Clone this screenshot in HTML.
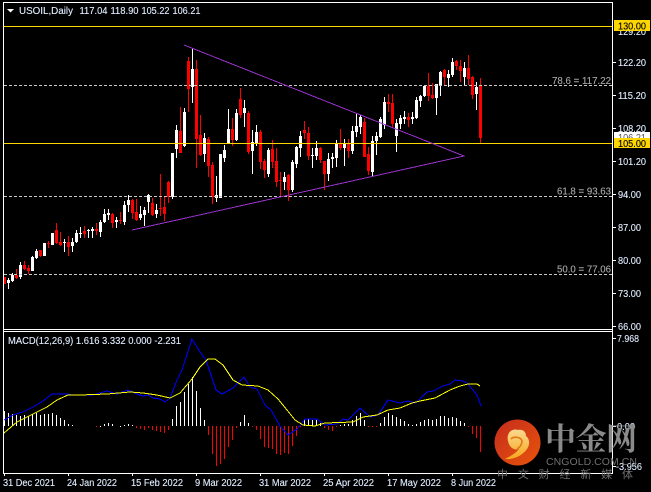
<!DOCTYPE html>
<html><head><meta charset="utf-8"><style>
html,body{margin:0;padding:0;background:#000;width:651px;height:492px;overflow:hidden}
svg{display:block}
text{font-family:"Liberation Sans",sans-serif;font-size:10px;fill:#e6f0ff;stroke:#cfe2ff;stroke-width:.12}
.g{fill:#a8a8a8;stroke:#a8a8a8}
.k{fill:#000;stroke:#000}
</style></head><body>
<svg width="651" height="492" viewBox="0 0 651 492" xmlns="http://www.w3.org/2000/svg">
<rect width="651" height="492" fill="#000"/>
<g transform="translate(.5 0)" fill="none" shape-rendering="crispEdges">
<path stroke="#fff" d="M8 278V289M12 273V282M20 262V279M32 256V271M36 249V259M44 243V256M52 233V245M64 239V252M72 238V252M76 230V243M80 227V238M88 229V238M92 227V238M100 220V237M104 209V223M108 209V220M116 217V228M124 201V225M128 195V212M140 206V220M144 207V226M148 194V213M156 204V218M172 153V199M176 125V158M184 108V147M192 48V103M204 133V162M216 176V202M220 154V198M224 145V162M228 109V143M236 109V141M244 100V127M252 130V174M256 125V146M268 148V177M284 172V190M292 160V192M296 146V168M300 131V157M312 148V168M316 141V160M328 153V181M332 153V168M336 140V167M344 139V166M352 126V154M356 113V137M360 115V134M372 136V176M376 132V155M380 117V138M384 97V129M396 119V152M400 115V129M404 111V124M412 112V124M416 97V119M420 95V107M424 85V97M436 84V115M440 71V96M448 70V87M452 58V77M464 62V86M476 82V110"/>
<path stroke="#fff" stroke-width="3" d="M8 280V283M12 275V281M20 265V277M32 257V271M36 251V258M44 243V256M52 233V245M64 242V243M72 242V246M76 233V242M80 233V234M88 230V231M92 229V231M100 222V232M104 214V222M108 213V215M116 220V222M124 205V222M128 200V205M140 214V218M144 210V215M148 195V202M156 210V214M172 153V197M176 130V149M184 112V146M192 69V87M204 138V154M216 195V198M220 154V198M224 150V158M228 129V143M236 113V140M244 108V113M252 142V151M256 132V144M268 150V174M284 177V182M292 162V190M296 147V164M300 136V148M312 155V156M316 148V156M328 159V174M332 157V159M336 144V158M344 143V148M352 131V151M356 126V132M360 117V127M372 141V172M376 136V141M380 119V137M384 102V125M396 123V136M400 118V124M404 117V119M412 117V119M416 100V118M420 96V101M424 86V96M436 84V98M440 72V85M448 74V78M452 62V75M464 68V77M476 87V94"/>
<path stroke="#f00" d="M4 277V284M16 269V279M24 261V270M28 265V274M40 250V257M48 241V248M56 223V244M60 232V246M68 236V256M84 226V238M96 223V235M112 213V228M120 212V224M132 199V219M136 199V221M152 198V216M160 174V216M164 196V221M168 181V203M180 107V153M188 57V112M196 60V168M200 115V156M208 137V177M212 162V204M232 118V146M240 88V118M248 111V154M260 130V169M264 159V178M272 140V168M276 148V187M280 172V197M288 174V201M304 121V139M308 127V160M320 147V163M324 161V190M340 129V150M348 139V158M364 118V157M368 147V175M388 94V112M392 94V128M408 113V127M428 73V101M432 83V99M444 69V86M456 60V70M460 60V82M468 55V85M472 76V99M480 78V143"/>
<path stroke="#f00" stroke-width="3" d="M4 277V284M16 275V278M24 265V269M28 268V271M40 250V256M48 243V244M56 230V243M60 242V245M68 242V247M84 231V234M96 229V231M112 214V223M120 220V221M132 200V213M136 212V220M152 203V215M160 208V209M164 207V214M168 182V197M180 131V153M188 61V89M196 69V139M200 135V155M208 139V166M212 165V197M232 129V140M240 99V115M248 113V152M260 132V162M264 161V170M272 149V162M276 161V182M280 180V181M288 175V190M304 130V133M308 133V156M320 148V160M324 161V174M340 144V148M348 144V151M364 122V157M368 154V171M388 102V104M392 103V124M408 117V120M428 86V96M432 95V98M444 70V77M456 61V66M460 66V71M468 68V79M472 77V95M480 86V138"/>
</g>
<g shape-rendering="crispEdges">
<path d="M4 85.5H612M4 196.5H612M4 274.5H612" stroke="#c8c8c8" stroke-dasharray="3 2" fill="none"/>
<path d="M4 26.5H612M4 143.5H612" stroke="#ffd700" fill="none"/>
<path d="M184 45L464 156L132 230" stroke="#9932cc" fill="none"/>
<path d="M3.5 2V474M3 2.5H613M612.5 2V474M3 329.5H613M3 331.5H613M3 473.5H613" stroke="#fff" fill="none"/>
<path d="M613 62.5h3M613 95.5h3M613 128.5h3M613 161.5h3M613 194.5h3M613 227.5h3M613 260.5h3M613 293.5h3M613 326.5h3M613 338.5h3M613 426.5h3M613 466.5h3M4.5 473v3M68.5 473v3M132.5 473v3M196.5 473v3M260.5 473v3M324.5 473v3M388.5 473v3M452.5 473v3" stroke="#fff" fill="none"/>
</g>
<g transform="translate(.5 0)" fill="none" shape-rendering="crispEdges">
<path stroke="#fff" d="M4 411V426M8 413V426M12 414V426M16 415V426M20 416V426M24 415V426M28 416V426M32 414V426M36 413V426M40 415V426M44 414V426M48 414V426M52 413V426M56 415V426M60 418V426M64 420V426M68 424V426M72 425V426M100 426V427M104 424V426M108 423V426M112 424V426M120 426V427M124 425V426M128 424V426M132 425V426M172 419V426M176 406V426M180 402V426M184 392V426M188 384V426M192 377V426M196 391V426M200 408V426M204 420V426M240 422V426M244 415V426M248 423V426M304 419V426M308 419V426M312 420V426M316 420V426M320 423V426M340 425V426M344 424V426M348 424V426M352 420V426M356 416V426M360 413V426M364 420V426M380 423V426M384 417V426M388 413V426M392 415V426M396 417V426M400 419V426M404 421V426M408 424V426M412 425V426M416 424V426M420 422V426M424 420V426M428 419V426M432 420V426M436 419V426M440 416V426M444 416V426M448 418V426M452 417V426M456 418V426M460 421V426M464 423V426"/>
<path stroke="#f00" d="M96 426V427M136 426V428M140 426V429M144 426V430M148 426V428M152 426V430M156 426V431M160 426V432M164 426V433M168 426V430M208 426V435M212 426V454M216 426V466M220 426V464M224 426V459M228 426V447M232 426V440M236 426V428M252 426V427M256 426V430M260 426V439M264 426V447M268 426V448M272 426V449M276 426V454M280 426V455M284 426V453M288 426V454M292 426V446M296 426V436M300 426V427M324 426V428M328 426V430M332 426V431M336 426V427M368 426V427M372 426V427M376 426V427M468 426V427M472 426V434M476 426V438M480 426V452"/>
</g>
<polyline fill="none" stroke="#0000ff" shape-rendering="crispEdges" points="4,420 13,415 23,412 33,407 43,401 52,394 67,394 72,395 93,395 107,391 117,394 128,390 137,394 143,396 148,395 153,398 160,399 165,402 170,398 177,380 182,370 192,339 200,352 206,360 216,390 222,394 233,388 244,377 250,387 257,389 265,405 271,410 280,426 288,435 297,429 305,419 317,419 325,425 337,424 343,419 348,420 360,408 370,417 378,415 388,400 400,403 408,401 415,403 420,399 427,392 433,391 443,386 450,384 455,380 463,381 468,384 477,395 481,406"/>
<polyline fill="none" stroke="#ffff00" shape-rendering="crispEdges" points="4,433 17,422 33,414 47,407 57,400 68,395 80,395 107,394 130,392 143,393 157,395 170,398 180,393 192,379 200,367 208,359 215,359 223,365 233,380 242,385 258,386 268,390 278,399 287,410 295,420 303,425 315,426 325,423 353,422 363,417 377,415 388,410 400,408 412,403 420,401 435,398 450,390 460,386 468,384 477,384 480,386"/>
<path d="M7 9H14L10.5 12.5Z" fill="#fff"/>
<text x="19" y="14" textLength="54" lengthAdjust="spacingAndGlyphs">USOIL,Daily</text>
<text x="79.5" y="14" textLength="28" lengthAdjust="spacingAndGlyphs">117.04</text>
<text x="110.5" y="14" textLength="28" lengthAdjust="spacingAndGlyphs">118.90</text>
<text x="141.5" y="14" textLength="28" lengthAdjust="spacingAndGlyphs">105.22</text>
<text x="172.5" y="14" textLength="28" lengthAdjust="spacingAndGlyphs">106.21</text>
<text class="g" x="552" y="84" textLength="59" lengthAdjust="spacingAndGlyphs">78.6 = 117.22</text>
<text class="g" x="557" y="194.5" textLength="54" lengthAdjust="spacingAndGlyphs">61.8 = 93.63</text>
<text class="g" x="557" y="272.5" textLength="54" lengthAdjust="spacingAndGlyphs">50.0 = 77.06</text>
<text x="618" y="35" textLength="28" lengthAdjust="spacingAndGlyphs">129.20</text>
<text x="618" y="66" textLength="28" lengthAdjust="spacingAndGlyphs">122.20</text>
<text x="618" y="99" textLength="28" lengthAdjust="spacingAndGlyphs">115.20</text>
<text x="618" y="132" textLength="28" lengthAdjust="spacingAndGlyphs">108.20</text>
<text x="618" y="165" textLength="28" lengthAdjust="spacingAndGlyphs">101.20</text>
<text x="618" y="198" textLength="23" lengthAdjust="spacingAndGlyphs">94.00</text>
<text x="618" y="231" textLength="23" lengthAdjust="spacingAndGlyphs">87.00</text>
<text x="618" y="264" textLength="23" lengthAdjust="spacingAndGlyphs">80.00</text>
<text x="618" y="297" textLength="23" lengthAdjust="spacingAndGlyphs">73.00</text>
<text x="618" y="330" textLength="23" lengthAdjust="spacingAndGlyphs">66.00</text>
<rect x="614" y="132" width="36" height="11" fill="#fff"/>
<text x="618" y="141" textLength="28" lengthAdjust="spacingAndGlyphs" style="fill:#555;stroke:none">106.21</text>
<rect x="614" y="20" width="36" height="11" fill="#ffd700"/>
<text class="k" x="618" y="29.5" textLength="28" lengthAdjust="spacingAndGlyphs">130.00</text>
<rect x="614" y="138" width="36" height="10" fill="#ffd700"/>
<text class="k" x="618" y="147" textLength="28" lengthAdjust="spacingAndGlyphs">105.00</text>
<text x="8" y="344" textLength="173" lengthAdjust="spacingAndGlyphs">MACD(12,26,9) 1.616 3.332 0.000 -2.231</text>
<text x="617" y="342" textLength="22" lengthAdjust="spacingAndGlyphs">7.968</text>
<text x="617" y="430" textLength="18" lengthAdjust="spacingAndGlyphs">0.00</text>
<text x="616" y="470" textLength="26" lengthAdjust="spacingAndGlyphs">-3.956</text>
<text x="3" y="486" textLength="52" lengthAdjust="spacingAndGlyphs">31 Dec 2021</text>
<text x="67" y="486" textLength="50" lengthAdjust="spacingAndGlyphs">24 Jan 2022</text>
<text x="131" y="486" textLength="52" lengthAdjust="spacingAndGlyphs">15 Feb 2022</text>
<text x="195" y="486" textLength="47" lengthAdjust="spacingAndGlyphs">9 Mar 2022</text>
<text x="259" y="486" textLength="52" lengthAdjust="spacingAndGlyphs">31 Mar 2022</text>
<text x="323" y="486" textLength="51" lengthAdjust="spacingAndGlyphs">25 Apr 2022</text>
<text x="387" y="486" textLength="54" lengthAdjust="spacingAndGlyphs">17 May 2022</text>
<text x="451" y="486" textLength="45" lengthAdjust="spacingAndGlyphs">8 Jun 2022</text>
<defs>
<linearGradient id="a" x1="0" y1="0" x2="1" y2="1"><stop offset="0" stop-color="#c42c1c"/><stop offset="1" stop-color="#e8540c"/></linearGradient>
<linearGradient id="b" x1="0" y1="0" x2="0" y2="1"><stop offset="0" stop-color="#fbd890"/><stop offset="1" stop-color="#f6a81c"/></linearGradient>
</defs>
<circle cx="517.5" cy="442.5" r="23" fill="url(#a)"/>
<path d="M508 441C506 433 512 428 518 430C523 429 526 432 526 436C530 439 530 445 527 449C523 455 514 460 505 459C511 456 516 453 519 449C514 451 509 447 508 441Z" fill="url(#b)"/>
<path d="M511 439C514 436 521 437 522 441C522 445 519 448 517 449" fill="none" stroke="#e07a14" stroke-width="1.6"/>
<text x="545" y="450" style="font-family:'Noto Serif CJK SC',serif;font-size:31px;font-weight:700;fill:#8a8a8a;stroke:none" textLength="92">中金网</text>
<text x="546" y="465" style="font-size:10.5px;fill:#6f6f6f;stroke:none" textLength="91">CNGOLD.COM.CN</text>
<text x="497" y="478" style="font-family:'Noto Sans CJK SC',sans-serif;font-size:11px;fill:#707070;stroke:none" textLength="136">中文财经新媒体</text>
</svg>
</body></html>
